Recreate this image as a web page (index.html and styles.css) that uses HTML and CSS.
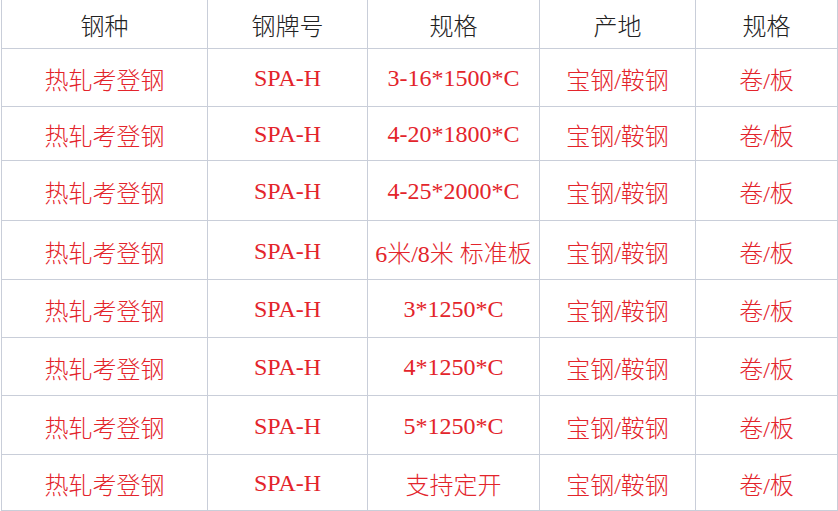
FILE: index.html
```html
<!DOCTYPE html>
<html lang="zh-CN">
<head>
<meta charset="utf-8">
<title>热轧考登钢</title>
<link rel="stylesheet" href="styles.css">
</head>
<body>
<div class="table">
  <div class="cell head">钢种</div>
  <div class="cell head">钢牌号</div>
  <div class="cell head">规格</div>
  <div class="cell head">产地</div>
  <div class="cell head">规格</div>

  <div class="cell">热轧考登钢</div><div class="cell">SPA-H</div><div class="cell">3-16*1500*C</div><div class="cell">宝钢/鞍钢</div><div class="cell">卷/板</div>
  <div class="cell">热轧考登钢</div><div class="cell">SPA-H</div><div class="cell">4-20*1800*C</div><div class="cell">宝钢/鞍钢</div><div class="cell">卷/板</div>
  <div class="cell">热轧考登钢</div><div class="cell">SPA-H</div><div class="cell">4-25*2000*C</div><div class="cell">宝钢/鞍钢</div><div class="cell">卷/板</div>
  <div class="cell">热轧考登钢</div><div class="cell">SPA-H</div><div class="cell">6米/8米&nbsp;标准板</div><div class="cell">宝钢/鞍钢</div><div class="cell">卷/板</div>
  <div class="cell">热轧考登钢</div><div class="cell">SPA-H</div><div class="cell">3*1250*C</div><div class="cell">宝钢/鞍钢</div><div class="cell">卷/板</div>
  <div class="cell">热轧考登钢</div><div class="cell">SPA-H</div><div class="cell">4*1250*C</div><div class="cell">宝钢/鞍钢</div><div class="cell">卷/板</div>
  <div class="cell">热轧考登钢</div><div class="cell">SPA-H</div><div class="cell">5*1250*C</div><div class="cell">宝钢/鞍钢</div><div class="cell">卷/板</div>
  <div class="cell">热轧考登钢</div><div class="cell">SPA-H</div><div class="cell">支持定开</div><div class="cell">宝钢/鞍钢</div><div class="cell">卷/板</div>
</div>
</body>
</html>
```

FILE: styles.css
```css
html, body {
  margin: 0;
  padding: 0;
  background: #ffffff;
}

body {
  padding-left: 1px;
  font-family: "Liberation Serif", "Noto Sans CJK SC", serif;
  font-size: 24px;
  font-weight: 300;
}

.table {
  display: grid;
  grid-template-columns: 206px 160px 172px 156px 142px;
  grid-template-rows: 49px 58px 54px 60px 59px 58px 58px 59px 56px;
  width: 837px;
  border-left: 1px solid #c9ced9;
  box-sizing: border-box;
}

.cell {
  display: flex;
  align-items: center;
  justify-content: center;
  border-right: 1px solid #c9ced9;
  border-bottom: 1px solid #c9ced9;
  color: #e3242b;
  white-space: nowrap;
  padding-top: 2px;
  box-sizing: border-box;
}

.head {
  color: #222222;
  padding-top: 0;
}
```
